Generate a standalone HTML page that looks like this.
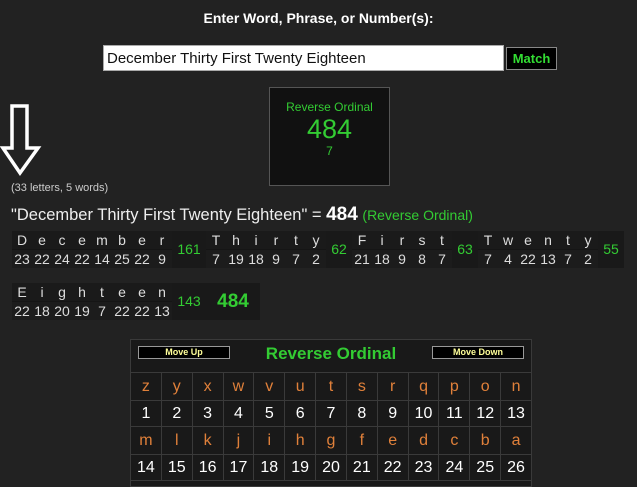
<!DOCTYPE html>
<html><head><style>
body{margin:0;width:637px;height:485px;background:#222;font-family:"Liberation Sans",Arial,sans-serif;position:relative;overflow:hidden}
.a{position:absolute}
.c{position:absolute;background:#1a1a1a;text-align:center;color:#ddd;font-size:14px;line-height:18px}
.c div{height:18px}
.c div+div{background:#1c1c1c;border-top:1px solid #151515}
.s{position:absolute;background:#191919;color:#3c3;font-size:14px;text-align:center;line-height:37px}
table{border-collapse:collapse}
td{border:1px solid #3a3a3a;width:29px;text-align:center;font-size:16px;height:25px;padding:0}
.o td{color:#e0803a}
.n td{color:#fff}
.btn{position:absolute;background:#000;border:1px solid #999;color:#ff9;font-size:9px;font-weight:bold;text-align:center;line-height:11px;height:11px}
</style></head><body>
<div class="a" style="left:0;width:637px;top:10px;text-align:center;color:#fff;font-weight:bold;font-size:14px">Enter Word, Phrase, or Number(s):</div>
<div class="a" style="left:103px;top:45px;width:396px;height:24px;background:#fff;border:1px solid #aaa;font-size:15px;line-height:25px;padding-left:3px;color:#111">December Thirty First Twenty Eighteen</div>
<div class="a" style="left:506px;top:47px;width:49px;height:21px;background:#000;border:1px solid #888;color:#3d3;font-weight:bold;font-size:13px;line-height:21px;text-align:center">Match</div>
<div class="a" style="left:269px;top:87px;width:119px;height:97px;background:#111;border:1px solid #555;text-align:center;color:#3c3">
<div style="font-size:12px;margin-top:12px">Reverse Ordinal</div>
<div style="font-size:27px;line-height:30px">484</div>
<div style="font-size:12px">7</div></div>
<svg class="a" style="left:0;top:103px" width="42" height="74"><path d="M12 3H27V45H38L20 70L3 45H12Z" fill="none" stroke="#fff" stroke-width="3.5" stroke-linejoin="miter"/></svg>
<div class="a" style="left:11px;top:182px;color:#ccc;font-size:11px">(33 letters, 5 words)</div>
<div class="a" style="left:11px;top:204px;color:#eee;font-size:16.5px">"December Thirty First Twenty Eighteen" = <b style="font-size:19px;color:#fff">484</b> <span style="color:#3c3;font-size:14px">(Reverse Ordinal)</span></div>
<div class="a" style="left:130px;top:339px;width:400px;height:146px;background:#191919;border:1px solid #3a3a3a">
<div class="btn" style="left:7px;top:6px;width:90px">Move Up</div>
<div class="btn" style="left:301px;top:6px;width:90px">Move Down</div>
<div class="a" style="left:0;width:400px;top:4px;text-align:center;color:#3c3;font-weight:bold;font-size:17px">Reverse Ordinal</div>
<table class="a" style="left:-1px;top:32px;width:402px">
<tr class="o"><td style="height:27px">z</td><td>y</td><td>x</td><td>w</td><td>v</td><td>u</td><td>t</td><td>s</td><td>r</td><td>q</td><td>p</td><td>o</td><td>n</td></tr>
<tr class="n"><td>1</td><td>2</td><td>3</td><td>4</td><td>5</td><td>6</td><td>7</td><td>8</td><td>9</td><td>10</td><td>11</td><td>12</td><td>13</td></tr>
<tr class="o"><td style="height:27px">m</td><td>l</td><td>k</td><td>j</td><td>i</td><td>h</td><td>g</td><td>f</td><td>e</td><td>d</td><td>c</td><td>b</td><td>a</td></tr>
<tr class="n"><td>14</td><td>15</td><td>16</td><td>17</td><td>18</td><td>19</td><td>20</td><td>21</td><td>22</td><td>23</td><td>24</td><td>25</td><td>26</td></tr>
</table></div>
<div class="c" style="left:12px;top:231px;width:20px"><div>D</div><div>23</div></div>
<div class="c" style="left:32px;top:231px;width:20px"><div>e</div><div>22</div></div>
<div class="c" style="left:52px;top:231px;width:20px"><div>c</div><div>24</div></div>
<div class="c" style="left:72px;top:231px;width:20px"><div>e</div><div>22</div></div>
<div class="c" style="left:92px;top:231px;width:20px"><div>m</div><div>14</div></div>
<div class="c" style="left:112px;top:231px;width:20px"><div>b</div><div>25</div></div>
<div class="c" style="left:132px;top:231px;width:20px"><div>e</div><div>22</div></div>
<div class="c" style="left:152px;top:231px;width:20px"><div>r</div><div>9</div></div>
<div class="s" style="left:172px;top:231px;width:34px;height:37px">161</div>
<div class="c" style="left:206px;top:231px;width:20px"><div>T</div><div>7</div></div>
<div class="c" style="left:226px;top:231px;width:20px"><div>h</div><div>19</div></div>
<div class="c" style="left:246px;top:231px;width:20px"><div>i</div><div>18</div></div>
<div class="c" style="left:266px;top:231px;width:20px"><div>r</div><div>9</div></div>
<div class="c" style="left:286px;top:231px;width:20px"><div>t</div><div>7</div></div>
<div class="c" style="left:306px;top:231px;width:20px"><div>y</div><div>2</div></div>
<div class="s" style="left:326px;top:231px;width:26px;height:37px">62</div>
<div class="c" style="left:352px;top:231px;width:20px"><div>F</div><div>21</div></div>
<div class="c" style="left:372px;top:231px;width:20px"><div>i</div><div>18</div></div>
<div class="c" style="left:392px;top:231px;width:20px"><div>r</div><div>9</div></div>
<div class="c" style="left:412px;top:231px;width:20px"><div>s</div><div>8</div></div>
<div class="c" style="left:432px;top:231px;width:20px"><div>t</div><div>7</div></div>
<div class="s" style="left:452px;top:231px;width:26px;height:37px">63</div>
<div class="c" style="left:478px;top:231px;width:20px"><div>T</div><div>7</div></div>
<div class="c" style="left:498px;top:231px;width:20px"><div>w</div><div>4</div></div>
<div class="c" style="left:518px;top:231px;width:20px"><div>e</div><div>22</div></div>
<div class="c" style="left:538px;top:231px;width:20px"><div>n</div><div>13</div></div>
<div class="c" style="left:558px;top:231px;width:20px"><div>t</div><div>7</div></div>
<div class="c" style="left:578px;top:231px;width:20px"><div>y</div><div>2</div></div>
<div class="s" style="left:598px;top:231px;width:26px;height:37px">55</div>
<div class="c" style="left:12px;top:283px;width:20px"><div>E</div><div>22</div></div>
<div class="c" style="left:32px;top:283px;width:20px"><div>i</div><div>18</div></div>
<div class="c" style="left:52px;top:283px;width:20px"><div>g</div><div>20</div></div>
<div class="c" style="left:72px;top:283px;width:20px"><div>h</div><div>19</div></div>
<div class="c" style="left:92px;top:283px;width:20px"><div>t</div><div>7</div></div>
<div class="c" style="left:112px;top:283px;width:20px"><div>e</div><div>22</div></div>
<div class="c" style="left:132px;top:283px;width:20px"><div>e</div><div>22</div></div>
<div class="c" style="left:152px;top:283px;width:20px"><div>n</div><div>13</div></div>
<div class="s" style="left:172px;top:283px;width:34px;height:37px">143</div>
<div class="s" style="left:206px;top:283px;width:54px;height:37px;font-size:19px;font-weight:bold">484</div>
</body></html>
